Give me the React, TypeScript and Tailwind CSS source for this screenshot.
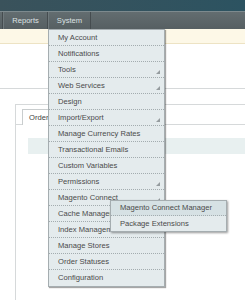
import React from "react";

const items = [
  { label: "My Account" },
  { label: "Notifications" },
  { label: "Tools", sub: true },
  { label: "Web Services", sub: true },
  { label: "Design" },
  { label: "Import/Export", sub: true },
  { label: "Manage Currency Rates" },
  { label: "Transactional Emails" },
  { label: "Custom Variables" },
  { label: "Permissions", sub: true },
  { label: "Magento Connect", sub: true },
  { label: "Cache Management" },
  { label: "Index Management" },
  { label: "Manage Stores" },
  { label: "Order Statuses" },
  { label: "Configuration" },
];

const subItems = ["Magento Connect Manager", "Package Extensions"];

function Arrow() {
  return (
    <svg width="4" height="4" viewBox="0 0 4 4" className="absolute right-[4px] bottom-[3px]">
      <polygon points="4,0 4,4 0,4" fill="#959c9f" />
    </svg>
  );
}

export default function App() {
  return (
    <div className="relative w-[245px] h-[300px] overflow-hidden bg-white font-['Liberation_Sans',Arial,sans-serif] text-[7.6px]">
      {/* Header */}
      <div className="h-[11px] bg-gradient-to-r from-[#3a525b] to-[#2c5361]" />
      <div className="h-px bg-[#7d8a8e]" />

      {/* Nav bar */}
      <div className="flex h-[17px] bg-gradient-to-b from-[#636d70] to-[#565f62] text-[#dde2e3]">
        <div className="w-[3px] border-r border-[#454c4f]" />
        <div className="w-[45px] flex items-center justify-center border-r border-[#454c4f] border-l border-l-[#6f797c]">
          Reports
        </div>
        <div className="w-[43px] flex items-center justify-center border-r border-[#454c4f] border-l border-l-[#6f797c]">
          System
        </div>
      </div>

      {/* Notice band */}
      <div className="h-[15px] bg-[#fdf8e7] border-b border-[#ede3c4]" />

      {/* Page body */}
      <div className="h-[45px] border-b border-[#d6d9da]" />
      <div className="flex mt-[15px]">
        <div className="w-[15px]" />
        <div className="flex-1 border-l border-t border-[#d6d9da] h-[200px]">
          <div className="flex mt-[4px] h-[16px]">
            <div className="w-[6px] border-b border-[#d6d9da]" />
            <div className="w-[30px] pl-[6px] flex items-center border border-b-0 border-[#c9cdce] text-[#444]">
              Order
            </div>
            <div className="flex-1 border-b border-[#d6d9da]" />
          </div>
          <div className="ml-[12px] mt-[13px] h-[16px] bg-[#e8f0f0]" />
        </div>
      </div>

      {/* System menu */}
      <div className="absolute left-[48px] top-[29px] w-[117px] bg-[#e4ebed] border border-[#a5adb0] shadow-[1px_1px_1px_rgba(0,0,0,0.35)] text-[#4a4a4a]">
        {items.map((it, i) => (
          <div
            key={it.label}
            className={`relative h-[16px] flex items-center pl-[9px] whitespace-nowrap ${
              i < items.length - 1 ? "border-b border-dotted border-[#a3acaf]" : ""
            }`}
          >
            {it.label}
            {it.sub && <Arrow />}
          </div>
        ))}
      </div>

      {/* Submenu */}
      <div className="absolute left-[110px] top-[200px] w-[117px] bg-[#e4ebed] border border-[#a5adb0] shadow-[1px_1px_2px_rgba(0,0,0,0.4)] text-[#4a4a4a]">
        {subItems.map((s, i) => (
          <div
            key={s}
            className={`h-[15px] flex items-center pl-[9px] whitespace-nowrap ${
              i === 0 ? "bg-[#d6e1e4] border-b border-dotted border-[#a3acaf]" : ""
            }`}
          >
            {s}
          </div>
        ))}
      </div>
    </div>
  );
}
